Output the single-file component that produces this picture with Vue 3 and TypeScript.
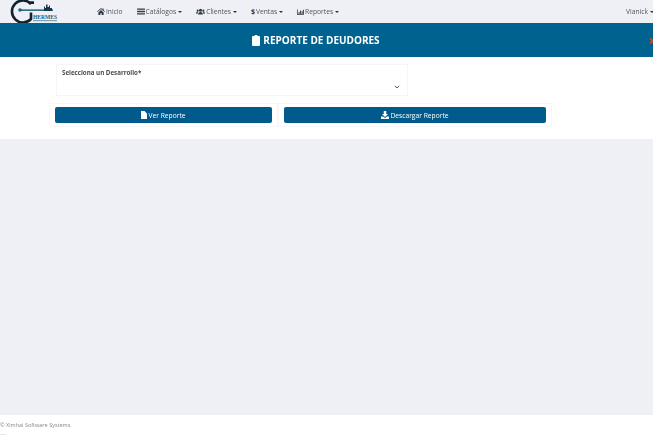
<script setup lang="ts">
const menu = [
  { label: 'Inicio', icon: 'home', caret: false },
  { label: 'Catálogos', icon: 'list', caret: true },
  { label: 'Clientes', icon: 'users', caret: true },
  { label: 'Ventas', icon: 'dollar', caret: true },
  { label: 'Reportes', icon: 'chart', caret: true },
]
</script>

<template>
  <div class="page">
    <nav class="navbar">
      <svg class="logo" width="50" height="24" viewBox="0 0 50 24">
        <path d="M26 2.600 H22 L23 4 A11 11 0 1 0 23 19 V12.500" fill="none" stroke="#14212e" stroke-width="2.600" />
        <circle cx="12" cy="10" r="1.800" fill="#1d6a86" />
        <rect x="13" y="9.400" width="32" height="1.500" fill="#1d5f7c" />
        <path d="M36 9.500 V6.500 h1 V8 h1 V4.500 h1.500 V7 h1.500 V5.500 h1 V8 h2 V11 H36Z" fill="#18384a" />
        <text x="25" y="18.500" class="logo-text" textLength="24" lengthAdjust="spacingAndGlyphs">HERMES</text>
        <rect x="25" y="20" width="24" height="1.200" fill="#7ba3b5" />
      </svg>
      <ul class="menu">
        <li v-for="item in menu" :key="item.label">
          <svg v-if="item.icon === 'home'" class="ico" width="8" height="7" viewBox="0 0 18 16">
            <path d="M9 0 0 8l1 1.200L9 2.400l8 6.800L18 8l-3-2.600V1h-2.500v2.300ZM3 10v6h4.500v-4h3v4H15v-6L9 4.800Z" />
          </svg>
          <svg v-else-if="item.icon === 'list'" class="ico" width="8" height="7" viewBox="0 0 18 16">
            <path d="M0 1h18v3H0ZM0 6.500h18v3H0ZM0 12h18v3H0Z" />
          </svg>
          <svg v-else-if="item.icon === 'users'" class="ico" width="9" height="7" viewBox="0 0 20 16">
            <circle cx="10" cy="5" r="3.500" />
            <circle cx="3.500" cy="6" r="2.400" />
            <circle cx="16.500" cy="6" r="2.400" />
            <path d="M4.500 15c0-4 2-6 5.500-6s5.500 2 5.500 6ZM0 13c0-3 1-4.500 3.500-4.500 1 0 1.500.3 1.500.3C4 10 3.300 11.500 3.200 13ZM20 13c0-3-1-4.500-3.500-4.500-1 0-1.500.3-1.500.3 1 1.200 1.700 2.700 1.800 4.200Z" />
          </svg>
          <span v-else-if="item.icon === 'dollar'" class="dollar">$</span>
          <svg v-else class="ico" width="7" height="6" viewBox="0 0 18 16">
            <path d="M0 1h2v13h16v2H0ZM4 8h2.500v5H4ZM8 4h2.500v9H8ZM12 6h2.500v7H12ZM15.500 2H18v11h-2.500Z" />
          </svg>
          <span class="label">{{ item.label }}</span>
          <i v-if="item.caret" class="caret"></i>
        </li>
      </ul>
      <div class="user"><span class="label">Vianick</span> <i class="caret"></i></div>
    </nav>

    <header class="banner">
      <h1>
        <svg width="8" height="11" viewBox="0 0 16 22">
          <path d="M5 2a3 3 0 0 1 6 0h3a2 2 0 0 1 2 2v16a2 2 0 0 1-2 2H2a2 2 0 0 1-2-2V4a2 2 0 0 1 2-2Z" fill="#fff" />
        </svg>
        <span class="soft">REPORTE DE DEUDORES</span>
      </h1>
      <span class="close">×</span>
    </header>

    <section class="panel">
      <div class="field">
        <label class="soft">Selecciona un Desarrollo*</label>
        <svg class="chevron" width="6" height="4" viewBox="0 0 6 4">
          <path d="M.8.8 3 3 5.200.8" fill="none" stroke="#444" stroke-width=".9" />
        </svg>
      </div>
      <div class="actions">
        <div class="cell cell-view">
          <button type="button">
            <svg width="6" height="8" viewBox="0 0 12 16">
              <path d="M0 0h7l5 5v11H0Z" fill="#fff" />
            </svg>
            <span class="soft">Ver Reporte</span>
          </button>
        </div>
        <div class="cell cell-download">
          <button type="button">
            <svg width="8" height="8" viewBox="0 0 16 16">
              <path d="M5.500 0h5v6H14L8 12 2 6h3.500ZM0 11h4l4 3 4-3h4v5H0Z" fill="#fff" />
            </svg>
            <span class="soft">Descargar Reporte</span>
          </button>
        </div>
      </div>
    </section>

    <main class="body"></main>

    <footer class="footer">
      <div class="soft">© Ximhai Software Systems.</div>
      <div class="soft dots">····</div>
    </footer>
  </div>
</template>

<style>
html,
body {
  margin: 0;
  overflow: hidden;
}
</style>

<style scoped>
.page {
  width: 653px;
  height: 435px;
  display: flex;
  flex-direction: column;
  font-family: "Open Sans", sans-serif;
  color: #333;
  background: #fff;
  overflow: hidden;
}

/* grayscale text, no colour fringes */
.label,
.soft {
  will-change: opacity;
}

/* Navbar */
.navbar {
  height: 23px;
  flex-shrink: 0;
  display: flex;
  align-items: center;
  background: #eef0f5;
  font-size: 6.700px;
  position: relative;
}

.logo {
  margin-left: 8px;
  align-self: flex-start;
  flex-shrink: 0;
}

.logo-text {
  font-family: "Liberation Serif", serif;
  font-size: 7px;
  font-weight: 700;
  fill: #1d5f7c;
}

.menu {
  display: flex;
  list-style: none;
  margin: 0 0 0 39px;
  padding: 0;
  gap: 14px;
}

.menu li {
  display: flex;
  align-items: center;
  gap: 1px;
  white-space: nowrap;
  color: #4f545a;
}

.ico {
  fill: #2f3a46;
}

.dollar {
  font-weight: 700;
  font-size: 7px;
  color: #2f3a46;
}

.caret {
  display: inline-block;
  margin-left: 1px;
  border-top: 2px solid #333;
  border-left: 2px solid transparent;
  border-right: 2px solid transparent;
}

.user {
  margin-left: auto;
  white-space: nowrap;
  margin-right: -1px;
  display: flex;
  align-items: center;
  gap: 1px;
  color: #4f545a;
}

/* Banner */
.banner {
  height: 34px;
  flex-shrink: 0;
  background: #00628f;
  display: flex;
  align-items: center;
  justify-content: center;
  padding-right: 21px;
  position: relative;
}

.banner h1 {
  margin: 0;
  font-size: 10px;
  font-weight: 700;
  color: #fff;
  display: flex;
  align-items: center;
  gap: 3px;
}

.close {
  position: absolute;
  right: -3px;
  top: 10px;
  font-size: 14px;
  line-height: 16px;
  font-weight: 700;
  color: #d9472b;
}

/* Panel */
.panel {
  height: 82px;
  flex-shrink: 0;
  box-sizing: border-box;
  padding: 7px 0 0 49px;
}

.field {
  width: 352px;
  height: 32px;
  margin-left: 7px;
  box-sizing: border-box;
  border: 1px solid #f4f5f7;
  padding: 3px 5px;
  position: relative;
}

.field label {
  display: block;
  font-size: 6.200px;
  font-weight: 700;
  color: #4a4a4a;
}

.chevron {
  position: absolute;
  right: 7px;
  top: 20px;
}

.actions {
  display: flex;
  margin-top: 7px;
}

.cell {
  box-sizing: border-box;
  height: 24px;
  padding: 3px 5px;
  border: 1px solid #f6f7f9;
}

.cell-view {
  width: 229px;
}

.cell-download {
  width: 274px;
}

.cell button {
  width: 100%;
  height: 16px;
  padding: 0;
  border: 0;
  border-radius: 2px;
  background: #005a8c;
  color: #fff;
  font-family: inherit;
  font-size: 6.700px;
  display: flex;
  align-items: center;
  justify-content: center;
  gap: 1px;
}

/* Body */
.body {
  flex: 1;
  background: #eef0f5;
}

.footer {
  height: 20px;
  flex-shrink: 0;
  padding-top: 6px;
  box-sizing: border-box;
  font-size: 5.500px;
  line-height: 8px;
  color: #888;
}

.dots {
  margin-top: 1px;
}
</style>
